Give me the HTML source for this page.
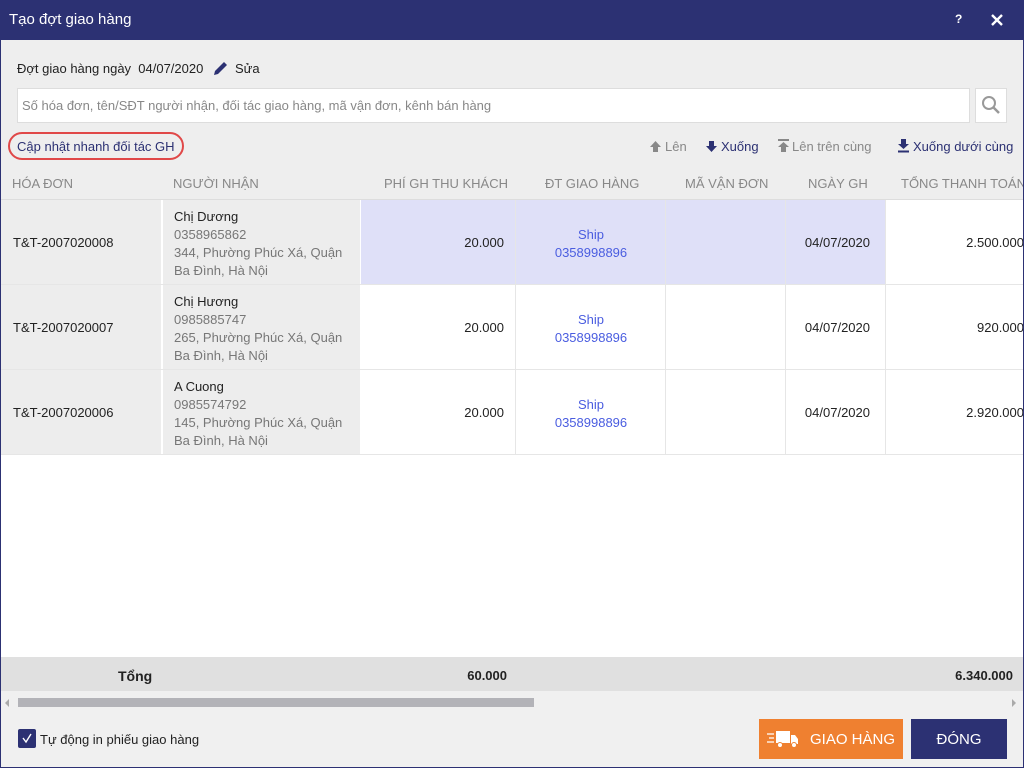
<!DOCTYPE html>
<html><head><meta charset="utf-8"><style>
*{margin:0;padding:0;box-sizing:border-box}
body{width:1024px;height:768px;overflow:hidden;font-family:"Liberation Sans",sans-serif;font-size:13px;color:#222;background:#eee;position:relative}
.a{position:absolute}
.title{left:0;top:0;width:1024px;height:40px;background:#2c3173;color:#fff}
.frame{left:0;top:40px;width:1024px;height:728px;border:1px solid #2c3173;border-top:0;background:#eeeeee}
.hdr{color:#888;font-size:13px;top:176px}
.gray{color:#777}
.blue{color:#4a5de0}
</style></head><body>
<div class="a title"><div class="a" style="left:9px;top:11px;font-size:15px">Tạo đợt giao hàng</div>
<div class="a" style="left:955px;top:12px;font-size:12px;font-weight:bold">?</div>
<svg class="a" style="left:991px;top:14px" width="12" height="12"><path d="M1 1L11 11M11 1L1 11" stroke="#fff" stroke-width="2.4"/></svg></div>
<div class="a frame"></div>
<div class="a" style="left:17px;top:61px;font-size:13px">Đợt giao hàng ngày&nbsp; 04/07/2020</div>
<svg class="a" style="left:213px;top:60px" width="16" height="16"><path d="M1 15L2 11L11 2L14 5L5 14Z" fill="#2c3173"/></svg>
<div class="a" style="left:235px;top:61px">Sửa</div>
<div class="a" style="left:17px;top:88px;width:953px;height:35px;background:#fff;border:1px solid #ddd"></div>
<div class="a" style="left:22px;top:98px;color:#888">Số hóa đơn, tên/SĐT người nhận, đối tác giao hàng, mã vận đơn, kênh bán hàng</div>
<div class="a" style="left:975px;top:88px;width:32px;height:35px;background:#fff;border:1px solid #ddd"></div>
<svg class="a" style="left:981px;top:95px" width="20" height="20"><circle cx="8" cy="8" r="6" fill="none" stroke="#999" stroke-width="2"/><path d="M12 12L18 18" stroke="#999" stroke-width="2.5"/></svg>
<div class="a" style="left:8px;top:132px;width:176px;height:28px;border:2px solid #e04848;border-radius:14px"></div>
<div class="a" style="left:17px;top:139px;color:#2c3173">Cập nhật nhanh đối tác GH</div>
<svg class="a" style="left:649px;top:140px" width="13" height="13"><path d="M6.5 1L12 7H9V12H4V7H1Z" fill="#888"/></svg>
<div class="a" style="left:665px;top:139px;color:#888">Lên</div>
<svg class="a" style="left:705px;top:140px" width="13" height="13"><path d="M6.5 12L12 6H9V1H4V6H1Z" fill="#2c3173"/></svg>
<div class="a" style="left:721px;top:139px;color:#2c3173">Xuống</div>
<svg class="a" style="left:777px;top:139px" width="13" height="14"><rect x="1" y="0" width="11" height="2" fill="#888"/><path d="M6.5 3L12 8H9V13H4V8H1Z" fill="#888"/></svg>
<div class="a" style="left:792px;top:139px;color:#888">Lên trên cùng</div>
<svg class="a" style="left:897px;top:139px" width="13" height="14"><path d="M6.5 10L12 5H9V0H4V5H1Z" fill="#2c3173"/><rect x="1" y="11.5" width="11" height="2" fill="#2c3173"/></svg>
<div class="a" style="left:913px;top:139px;color:#2c3173">Xuống dưới cùng</div>
<div class="a hdr" style="left:12px">HÓA ĐƠN</div>
<div class="a hdr" style="left:173px">NGƯỜI NHẬN</div>
<div class="a hdr" style="left:384px">PHÍ GH THU KHÁCH</div>
<div class="a hdr" style="left:545px">ĐT GIAO HÀNG</div>
<div class="a hdr" style="left:685px">MÃ VẬN ĐƠN</div>
<div class="a hdr" style="left:808px">NGÀY GH</div>
<div class="a hdr" style="left:901px;white-space:nowrap">TỔNG THANH TOÁN</div>
<div class="a" style="left:1px;top:199px;width:1022px;height:1px;background:#ddd"></div>
<div class="a" style="left:1px;top:455px;width:1022px;height:202px;background:#fff"></div>
<div class="a" style="left:1px;top:200px;width:1022px;height:255px;background:#fff"></div>
<div class="a" style="left:1px;top:200px;width:160px;height:255px;background:#ededed"></div>
<div class="a" style="left:163px;top:200px;width:197px;height:255px;background:#ededed"></div>
<div class="a" style="left:361px;top:200px;width:154px;height:84px;background:#dfe0f8"></div>
<div class="a" style="left:516px;top:200px;width:149px;height:84px;background:#dfe0f8"></div>
<div class="a" style="left:666px;top:200px;width:119px;height:84px;background:#dfe0f8"></div>
<div class="a" style="left:786px;top:200px;width:99px;height:84px;background:#dfe0f8"></div>
<div class="a" style="left:1px;top:284px;width:1022px;height:1px;background:#e6e6e6"></div>
<div class="a" style="left:1px;top:369px;width:1022px;height:1px;background:#e6e6e6"></div>
<div class="a" style="left:1px;top:454px;width:1022px;height:1px;background:#e6e6e6"></div>
<div class="a" style="left:515px;top:200px;width:1px;height:255px;background:#e6e6e6"></div>
<div class="a" style="left:665px;top:200px;width:1px;height:255px;background:#e6e6e6"></div>
<div class="a" style="left:785px;top:200px;width:1px;height:255px;background:#e6e6e6"></div>
<div class="a" style="left:885px;top:200px;width:1px;height:255px;background:#e6e6e6"></div>

<div class="a" style="left:13px;top:235px">T&amp;T-2007020008</div>
<div class="a" style="left:174px;top:208px;line-height:18px">Chị Dương<br><span class="gray">0358965862<br>344, Phường Phúc Xá, Quận<br>Ba Đình, Hà Nội</span></div>
<div class="a" style="left:440px;top:235px;width:64px;text-align:right">20.000</div>
<div class="a blue" style="left:516px;top:226px;width:150px;text-align:center;line-height:18px">Ship<br>0358998896</div>
<div class="a" style="left:786px;top:235px;width:84px;text-align:right">04/07/2020</div>
<div class="a" style="left:900px;top:235px;width:124px;text-align:right">2.500.000</div>

<div class="a" style="left:13px;top:320px">T&amp;T-2007020007</div>
<div class="a" style="left:174px;top:293px;line-height:18px">Chị Hương<br><span class="gray">0985885747<br>265, Phường Phúc Xá, Quận<br>Ba Đình, Hà Nội</span></div>
<div class="a" style="left:440px;top:320px;width:64px;text-align:right">20.000</div>
<div class="a blue" style="left:516px;top:311px;width:150px;text-align:center;line-height:18px">Ship<br>0358998896</div>
<div class="a" style="left:786px;top:320px;width:84px;text-align:right">04/07/2020</div>
<div class="a" style="left:900px;top:320px;width:124px;text-align:right">920.000</div>

<div class="a" style="left:13px;top:405px">T&amp;T-2007020006</div>
<div class="a" style="left:174px;top:378px;line-height:18px">A Cuong<br><span class="gray">0985574792<br>145, Phường Phúc Xá, Quận<br>Ba Đình, Hà Nội</span></div>
<div class="a" style="left:440px;top:405px;width:64px;text-align:right">20.000</div>
<div class="a blue" style="left:516px;top:396px;width:150px;text-align:center;line-height:18px">Ship<br>0358998896</div>
<div class="a" style="left:786px;top:405px;width:84px;text-align:right">04/07/2020</div>
<div class="a" style="left:900px;top:405px;width:124px;text-align:right">2.920.000</div>
<div class="a" style="left:1023px;top:40px;width:1px;height:728px;background:#2c3173"></div>

<div class="a" style="left:1px;top:657px;width:1022px;height:34px;background:#e0e0e0"></div>
<div class="a" style="left:118px;top:668px;font-weight:bold;font-size:14px">Tổng</div>
<div class="a" style="left:440px;top:668px;width:67px;text-align:right;font-weight:bold">60.000</div>
<div class="a" style="left:900px;top:668px;width:113px;text-align:right;font-weight:bold">6.340.000</div>
<div class="a" style="left:1px;top:691px;width:1022px;height:19px;background:#f0f0f0"></div>
<div class="a" style="left:18px;top:698px;width:516px;height:9px;background:#b3b3b8"></div>
<div class="a" style="left:5px;top:699px;width:0;height:0;border:4px solid transparent;border-right-color:#aaa;border-left:0"></div>
<div class="a" style="left:1012px;top:699px;width:0;height:0;border:4px solid transparent;border-left-color:#aaa;border-right:0"></div>
<div class="a" style="left:1px;top:710px;width:1022px;height:57px;background:#f0f0f0"></div>
<div class="a" style="left:18px;top:729px;width:18px;height:19px;background:#2c3173;border-radius:2px"></div>
<svg class="a" style="left:20px;top:731px" width="14" height="14"><path d="M3 7L6 11L11 3" stroke="#fff" stroke-width="1.4" fill="none"/></svg>
<div class="a" style="left:40px;top:732px">Tự động in phiếu giao hàng</div>
<div class="a" style="left:759px;top:719px;width:144px;height:40px;background:#ef8030"></div>
<svg class="a" style="left:766px;top:729px" width="34" height="20"><path d="M1 5H8M3 9H8M1 13H8" stroke="#fff" stroke-width="1.2"/><rect x="10" y="2" width="14" height="12" fill="#fff"/><path d="M25 6H29L32 10V15H25Z" fill="#fff"/><circle cx="14" cy="16" r="2.5" fill="#fff" stroke="#ef8030"/><circle cx="28" cy="16" r="2.5" fill="#fff" stroke="#ef8030"/></svg>
<div class="a" style="left:810px;top:731px;color:#fff;font-size:15px">GIAO HÀNG</div>
<div class="a" style="left:911px;top:719px;width:96px;height:40px;background:#2c3173;color:#fff;font-size:15px;text-align:center;padding-top:12px">ĐÓNG</div>
</body></html>
